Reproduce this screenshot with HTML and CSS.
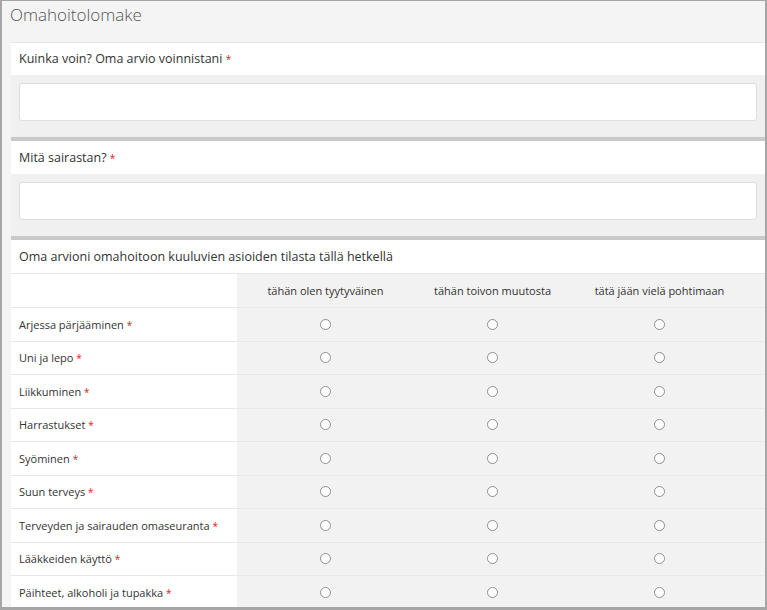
FILE: index.html
```html
<!DOCTYPE html>
<html lang="fi">
<head>
<meta charset="utf-8">
<title>Omahoitolomake</title>
<link rel="stylesheet" href="styles.css">
</head>
<body>
<div class="frame">
  <h1 class="title">Omahoitolomake</h1>
  <div class="panels">
    <section class="panel first">
      <div class="panel-head">Kuinka voin? Oma arvio voinnistani <span class="req">*</span></div>
      <div class="panel-body"><div class="input"></div></div>
    </section>
    <section class="panel">
      <div class="panel-head">Mitä sairastan? <span class="req">*</span></div>
      <div class="panel-body"><div class="input"></div></div>
    </section>
    <section class="panel">
      <div class="panel-head">Oma arvioni omahoitoon kuuluvien asioiden tilasta tällä hetkellä</div>
      <div class="matrix">
        <div class="row head">
          <div class="label"></div>
          <div class="cells">
            <div class="cell">tähän olen tyytyväinen</div>
            <div class="cell">tähän toivon muutosta</div>
            <div class="cell">tätä jään vielä pohtimaan</div>
          </div>
        </div>
        <div class="row"><div class="label"><span>Arjessa pärjääminen <span class="req">*</span></span></div><div class="cells"><div class="cell"><span class="radio"></span></div><div class="cell"><span class="radio"></span></div><div class="cell"><span class="radio"></span></div></div></div>
        <div class="row"><div class="label"><span>Uni ja lepo <span class="req">*</span></span></div><div class="cells"><div class="cell"><span class="radio"></span></div><div class="cell"><span class="radio"></span></div><div class="cell"><span class="radio"></span></div></div></div>
        <div class="row"><div class="label"><span>Liikkuminen <span class="req">*</span></span></div><div class="cells"><div class="cell"><span class="radio"></span></div><div class="cell"><span class="radio"></span></div><div class="cell"><span class="radio"></span></div></div></div>
        <div class="row"><div class="label"><span>Harrastukset <span class="req">*</span></span></div><div class="cells"><div class="cell"><span class="radio"></span></div><div class="cell"><span class="radio"></span></div><div class="cell"><span class="radio"></span></div></div></div>
        <div class="row"><div class="label"><span>Syöminen <span class="req">*</span></span></div><div class="cells"><div class="cell"><span class="radio"></span></div><div class="cell"><span class="radio"></span></div><div class="cell"><span class="radio"></span></div></div></div>
        <div class="row"><div class="label"><span>Suun terveys <span class="req">*</span></span></div><div class="cells"><div class="cell"><span class="radio"></span></div><div class="cell"><span class="radio"></span></div><div class="cell"><span class="radio"></span></div></div></div>
        <div class="row"><div class="label"><span>Terveyden ja sairauden omaseuranta <span class="req">*</span></span></div><div class="cells"><div class="cell"><span class="radio"></span></div><div class="cell"><span class="radio"></span></div><div class="cell"><span class="radio"></span></div></div></div>
        <div class="row"><div class="label"><span>Lääkkeiden käyttö <span class="req">*</span></span></div><div class="cells"><div class="cell"><span class="radio"></span></div><div class="cell"><span class="radio"></span></div><div class="cell"><span class="radio"></span></div></div></div>
        <div class="row"><div class="label"><span>Päihteet, alkoholi ja tupakka <span class="req">*</span></span></div><div class="cells"><div class="cell"><span class="radio"></span></div><div class="cell"><span class="radio"></span></div><div class="cell"><span class="radio"></span></div></div></div>
      </div>
    </section>
  </div>
</div>
</body>
</html>
```
FILE: styles.css
```css
html, body {
  margin: 0;
  padding: 0;
}
body {
  font-family: "Open Sans", "Liberation Sans", sans-serif;
  color: #333;
}
.frame {
  box-sizing: border-box;
  width: 767px;
  height: 610px;
  border: 2px solid #a6a6a6;
  border-bottom-width: 3px;
  border-top-width: 1px;
  background: #f4f4f4;
  overflow: hidden;
}
.title {
  margin: 0;
  height: 41px;
  padding: 2px 0 0 8px;
  box-sizing: border-box;
  font-size: 17px;
  font-weight: 300;
  color: #555;
  line-height: 24px;
}
.panels {
  margin-left: 9px;
}
.panel {
  border-top: 4px solid #c9c9c9;
}
.panel.first {
  border-top: 1px solid #e6e6e6;
}
.panel-head {
  background: #fff;
  height: 33px;
  padding-left: 8px;
  font-size: 12.5px;
  line-height: 33px;
  color: #333;
}
.panel.first .panel-head {
  height: 32px;
  line-height: 32px;
}
.req {
  color: #e02020;
  font-size: 10px;
}
.panel-body {
  background: #f0f0f0;
  padding: 8px 8px 16px 8px;
}
.input {
  height: 36px;
  background: #fff;
  border: 1px solid #dedede;
  border-radius: 3px;
}
.matrix {
  background: #fff;
}
.row {
  display: flex;
  height: 33.5px;
  box-sizing: border-box;
  border-top: 1px solid #e6e9ea;
  font-size: 11px;
}
.row.head {
  height: 34px;
}
.label {
  width: 226px;
  padding-left: 8px;
  box-sizing: border-box;
  display: flex;
  align-items: center;
  background: #fff;
  white-space: nowrap;
}
.cells {
  flex: 1;
  display: flex;
  background: #f2f2f2;
  padding-left: 5px;
}
.cell {
  width: 167px;
  display: flex;
  align-items: center;
  justify-content: center;
  white-space: nowrap;
}
.radio {
  width: 11px;
  height: 11px;
  box-sizing: border-box;
  border: 1px solid #8f8f8f;
  border-radius: 50%;
  background: #fff;
}
```
